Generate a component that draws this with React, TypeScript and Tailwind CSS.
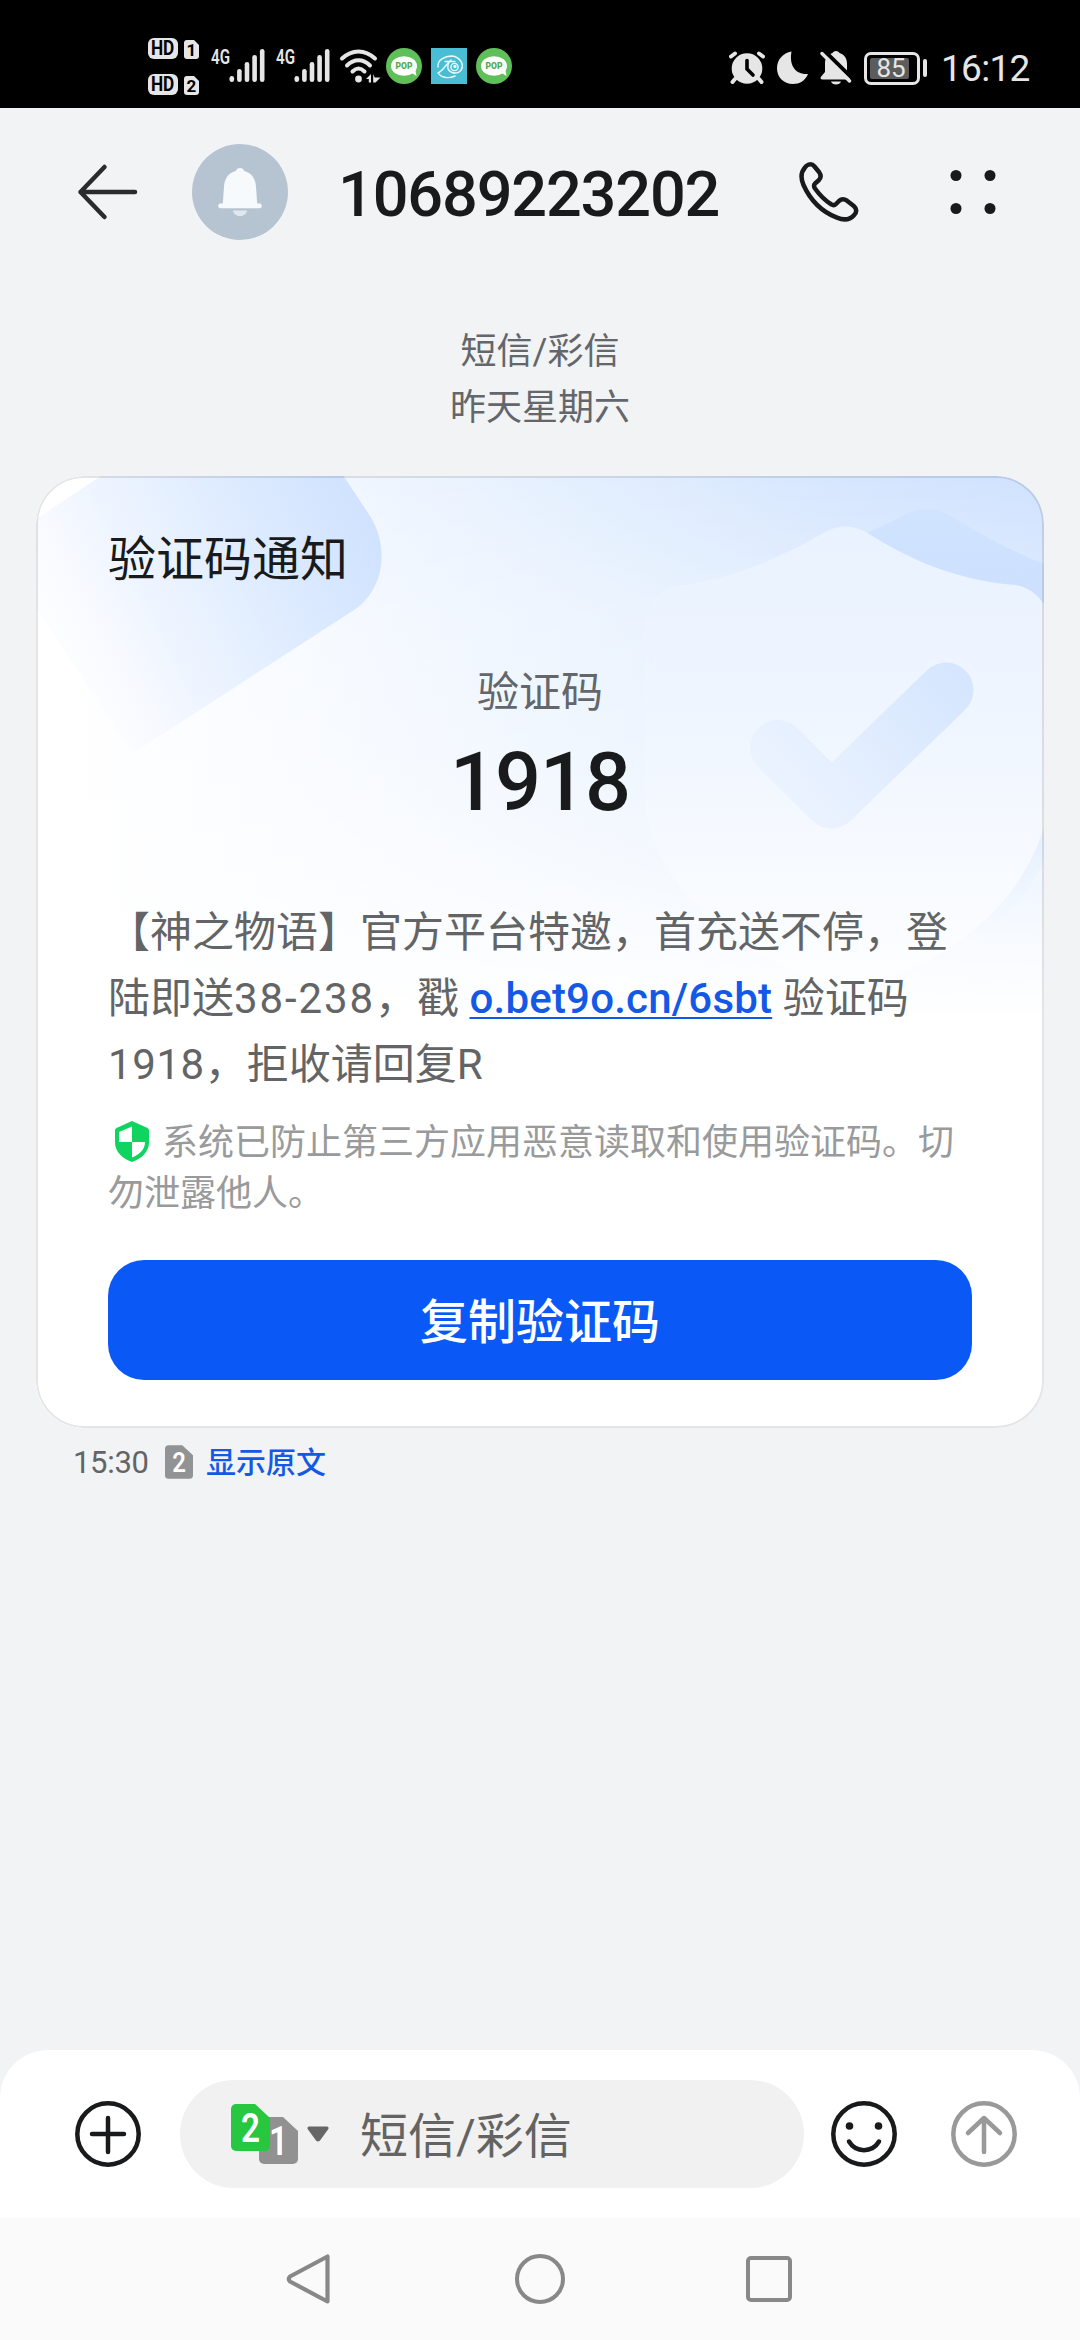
import type { ReactNode } from 'react';

const SIM_NUMBER = '10689223202';

function HdBadge({ slot }: { slot: string }) {
  return (
    <div className="flex gap-[6px]">
      <div className="flex h-[21px] w-[30px] items-center justify-center rounded-[6px] bg-[#e6e6e6] text-[20px] leading-[21px] font-bold text-black">
        <span className="scale-x-[0.86]">HD</span>
      </div>
      <svg className="overflow-visible" width="15" height="21" viewBox="0 0 15 21">
        <path d="M3 2h7l5 5v11a3 3 0 0 1-3 3H3a3 3 0 0 1-3-3V5a3 3 0 0 1 3-3z" fill="#e6e6e6" />
        <text x="7.500" y="18" textAnchor="middle" fontSize="17" fontWeight="700" fill="#000">
          {slot}
        </text>
      </svg>
    </div>
  );
}

function Signal() {
  const bars = [6, 13, 20, 27, 33];
  return (
    <svg width="54" height="36" viewBox="0 0 54 36" fill="#e6e6e6">
      <text x="0" y="15.800" fontSize="20" fontWeight="600" textLength="19" lengthAdjust="spacingAndGlyphs">
        4G
      </text>
      {bars.map((h, i) => (
        <rect key={h} x={18.5 + i * 7.6} y={34 - h} width="4.600" height={h} rx="2.300" />
      ))}
    </svg>
  );
}

function WifiIcon() {
  return (
    <svg width="42" height="36" viewBox="0 0 42 36" fill="none" stroke="#e6e6e6" strokeWidth="4" strokeLinecap="round">
      <path d="M3 10.500C13 1 26 1 36 10.500" />
      <path d="M8 17.500C15 10.500 24 10.500 31 17.500" />
      <path d="M13.500 23.500C17.500 19.500 21.500 19.500 25.500 23.500" />
      <circle cx="19.500" cy="31" r="3.400" fill="#e6e6e6" stroke="none" />
      <path d="M27 31L32 26v8.500h-2.200V31zM34.200 26l1.500 3.500H41.500L36.500 34.500h-2.300z" fill="#e6e6e6" stroke="none" />
    </svg>
  );
}

function PopIcon() {
  return (
    <svg width="36" height="36" viewBox="0 0 36 36">
      <circle cx="18" cy="18" r="18" fill="#5fc05a" />
      <ellipse cx="18" cy="18" rx="13" ry="9.800" fill="#fff" />
      <path d="M24 24l6.500 4-1.500-8z" fill="#fff" />
      <text x="9.500" y="21.300" fontSize="9" fontWeight="900" fill="#4fae4d" textLength="17" lengthAdjust="spacingAndGlyphs">
        POP
      </text>
    </svg>
  );
}

function FishIcon() {
  return (
    <svg width="36" height="36" viewBox="0 0 36 36" fill="none" stroke="#e8fbff" strokeWidth="1.400" strokeLinecap="round">
      <rect width="36" height="36" fill="#49bdd3" stroke="none" />
      <path d="M7 19C6 12 14 8 21 8c8 1 12 8 9.500 13" />
      <path d="M7 25C13 22 15 16 20 12M8 26C12 31 20 30 24 28" />
      <path d="M14 13.500h10M18 14c-2 4-2 9 3 10.500C26 26 30 24 31 20" />
      <circle cx="23.500" cy="19" r="3.600" />
      <circle cx="24" cy="18.500" r="1" />
    </svg>
  );
}

function AlarmIcon() {
  return (
    <svg width="36" height="34" viewBox="0 0 36 34" stroke="#e6e6e6" strokeLinecap="round" fill="none">
      <circle cx="18" cy="17.500" r="15.300" fill="#e6e6e6" stroke="none" />
      <path d="M2 5.500L6 2.500M34 5.500L30 2.500" strokeWidth="4" />
      <path d="M6 28l-2.500 3M30 28l2.500 3" strokeWidth="4" />
      <path d="M18 9.500v8.500l6 6" stroke="#000" strokeWidth="3.600" />
    </svg>
  );
}

function MutedBellIcon() {
  return (
    <svg width="32" height="34" viewBox="0 0 32 34">
      <path
        d="M16 0c2 0 3 1 3.500 2C24.500 3.500 27 7.500 27 12.500v9l3 4.500c.6 1.200 0 2.500-1.400 2.500H2.500C.5 28.500 0 27 1 25.800L5 21v-8.500C5 7.500 7.500 3.500 12.500 2 13 1 14 0 16 0z"
        fill="#e6e6e6"
      />
      <path d="M11 30.500h10c-1 4-9 4-10 0z" fill="#e6e6e6" />
      <path d="M4-.5L36 31" stroke="#000" strokeWidth="4" />
      <path d="M2 2.500L29.500 30" stroke="#e6e6e6" strokeWidth="3.400" strokeLinecap="round" />
    </svg>
  );
}

function StatusBar() {
  return (
    <div className="flex h-[108px] items-start bg-black pl-[148px] text-[#e6e6e6]">
      <div className="flex flex-col gap-[15px] pt-[38px]">
        <HdBadge slot="1" />
        <HdBadge slot="2" />
      </div>
      <div className="flex pt-[48px]">
        <div className="ml-[12px] flex gap-[11px]">
          <Signal />
          <Signal />
        </div>
        <div className="ml-[9px] flex">
          <WifiIcon />
        </div>
        <div className="ml-[5px] flex gap-[9px]">
          <PopIcon />
          <FishIcon />
          <PopIcon />
        </div>
      </div>
      <div className="ml-auto flex items-center pt-[50px] pr-[49px]">
        <AlarmIcon />
        <svg className="ml-[12px]" width="32" height="34" viewBox="0 0 32 34">
          <path d="M14.500.5C12 14 18 24 31 23c-3 7-8.500 10-15 10C6.500 33 0 26 0 17.500 0 8.500 6 2 14.500.5z" fill="#e6e6e6" />
        </svg>
        <div className="ml-[11px]">
          <MutedBellIcon />
        </div>
        <div className="ml-[12px] flex h-[33px] w-[56px] rounded-[7px] border-[3px] border-[#e6e6e6] p-[3px]">
          <div className="flex h-[21px] w-[39px] items-center justify-center rounded-[2px] bg-[#5c5c5c] pl-[3px] text-[26px] leading-none">
            85
          </div>
        </div>
        <div className="ml-[3px] h-[18px] w-[4px] rounded-[2px] bg-[#e6e6e6]" />
        <div className="ml-[14px] w-[90px] pt-[2px] text-[37px] leading-[34px] tracking-[-0.700px] whitespace-nowrap">16:12</div>
      </div>
    </div>
  );
}

function Header() {
  return (
    <header className="flex h-[168px] items-center pl-[77px]">
      <svg width="62" height="58" viewBox="0 0 62 58" fill="none" stroke="#2a2b2d" strokeWidth="4.500" strokeLinecap="round" strokeLinejoin="round">
        <path d="M27.500 4L3.500 29l24 25M3.500 29H58" />
      </svg>
      <svg className="ml-[53px]" width="96" height="96" viewBox="0 0 96 96">
        <circle cx="48" cy="48" r="48" fill="#b6c4d2" />
        <path
          d="M48 24c2 0 3.500 1.200 4.300 3C60 29 63.500 35 64 43l1.200 16.500H68a2.500 2.500 0 0 1 0 4.800H28a2.500 2.500 0 0 1 0-4.800h2.800L32 43c.5-8 4-14 11.700-16 .8-1.800 2.300-3 4.300-3z"
          fill="#f7fafd"
        />
        <path d="M41 66.500h14c-1 7.500-13 7.500-14 0z" fill="#e1e8ef" />
      </svg>
      <h1 className="ml-[50px] w-[390px] pt-[5px] text-[63px] leading-none font-medium tracking-[-1.150px] whitespace-nowrap text-[#191a1b]">
        {SIM_NUMBER}
      </h1>
      <svg className="ml-[70px]" width="64" height="64" viewBox="0 0 64 64" fill="none" stroke="#191a1b" strokeWidth="4.500" strokeLinejoin="round">
        <path d="M7 7.500C10 3.500 14 3.500 16.500 6.500L21 12c2.500 3.500 2.200 6-.5 8.500L17 23.500c-1.500 1.500-1.200 3 0 5C22 35.500 27 40.500 33.500 44.500c1.500 1 3 1 4.500-.5l3-3c2.500-2.300 5-2.300 8-.3l6.500 5c3.500 3 3.500 6.500.5 9.500-4 4.500-9.500 5.500-17 2.500C23 51.500 12.500 40.500 5.500 25 2.500 18 3 12 7 7.500z" />
      </svg>
      <svg className="ml-[87px]" width="48" height="48" viewBox="0 0 48 48" fill="#191a1b">
        <circle cx="7" cy="7.500" r="5.500" />
        <circle cx="41" cy="7.500" r="5.500" />
        <circle cx="7" cy="40.500" r="5.500" />
        <circle cx="41" cy="40.500" r="5.500" />
      </svg>
    </header>
  );
}

function CardBackdrop() {
  return (
    <svg className="absolute inset-0" width="1008" height="952" viewBox="36 476 1008 952">
      <defs>
        <linearGradient id="across" gradientUnits="userSpaceOnUse" x1="36" y1="0" x2="1044" y2="0">
          <stop offset="0.04" stopColor="#ffffff" />
          <stop offset="0.35" stopColor="#eef5ff" />
          <stop offset="0.6" stopColor="#e0edfe" />
          <stop offset="0.8" stopColor="#d6e6fe" />
          <stop offset="1" stopColor="#cfe2ff" />
        </linearGradient>
        <linearGradient id="fade" gradientUnits="userSpaceOnUse" x1="0" y1="476" x2="0" y2="1020">
          <stop offset="0" stopColor="#fff" stopOpacity="0" />
          <stop offset="0.25" stopColor="#fff" stopOpacity="0.35" />
          <stop offset="0.5" stopColor="#fff" stopOpacity="0.48" />
          <stop offset="0.75" stopColor="#fff" stopOpacity="0.72" />
          <stop offset="1" stopColor="#fff" stopOpacity="1" />
        </linearGradient>
        <linearGradient id="tile" gradientUnits="userSpaceOnUse" x1="365" y1="500" x2="70" y2="650">
          <stop offset="0" stopColor="#cfe2ff" />
          <stop offset="0.5" stopColor="#e4efff" />
          <stop offset="0.9" stopColor="#f8faff" />
          <stop offset="1" stopColor="#fcfdff" />
        </linearGradient>
        <linearGradient id="shield" gradientUnits="userSpaceOnUse" x1="845" y1="527" x2="845" y2="985">
          <stop offset="0" stopColor="#e9f2ff" />
          <stop offset="0.45" stopColor="#f0f6ff" />
          <stop offset="1" stopColor="#fdfeff" />
        </linearGradient>
        <linearGradient id="shieldBack" gradientUnits="userSpaceOnUse" x1="0" y1="509" x2="0" y2="960">
          <stop offset="0" stopColor="#d0e3ff" />
          <stop offset="0.3" stopColor="#cbe0ff" />
          <stop offset="0.7" stopColor="#e4effe" />
          <stop offset="1" stopColor="#fbfdff" />
        </linearGradient>
        <linearGradient id="tick" gradientUnits="userSpaceOnUse" x1="960" y1="680" x2="800" y2="820">
          <stop offset="0" stopColor="#d5e6fe" />
          <stop offset="1" stopColor="#ecf3ff" />
        </linearGradient>
      </defs>
      <rect x="36" y="476" width="1008" height="952" fill="url(#across)" />
      <rect x="36" y="476" width="1008" height="952" fill="url(#fade)" />
      <path d="M36 519L101 476H343.500L370 516C390 548 384 590 354 610L138 750Q132 754 128 748L36 608z" fill="url(#tile)" />
      <path d="M867 533C885 525 897 519 906 514Q927 503 949 515C985 537 1010 550 1044 564V860C1030 890 1010 915 975 945L867 800z" fill="url(#shieldBack)" />
      <path
        d="M827 531Q845 522 864 531C910 560 955 580 1015 585Q1032 587 1044 604V828C1025 885 985 935 905 972Q850 995 795 972C710 935 645 870 645 790V630Q645 592 678 586C735 578 780 558 827 531z"
        fill="url(#shield)"
      />
      <path d="M777.600 747.500L831.500 801L946 690" fill="none" stroke="url(#tick)" strokeWidth="55" strokeLinecap="round" strokeLinejoin="round" />
    </svg>
  );
}

function MessageCard() {
  return (
    <section className="relative h-[952px] overflow-hidden rounded-[48px] bg-white">
      <CardBackdrop />
      <div className="relative flex flex-col px-[72px] pt-[54px]">
        <h2 className="text-[48px] leading-[60px] text-[#191a1b]">验证码通知</h2>
        <div className="mt-[76px] flex flex-col items-center">
          <span className="text-[42px] leading-[54px] text-[#63666a]">验证码</span>
          <span className="mt-[13px] text-[81px] leading-[100px] font-medium tracking-[-1px] text-[#191a1b]">1918</span>
        </div>
        <div className="mt-[67px] text-[42px] leading-[66px] whitespace-nowrap text-[#636466]">
          <p>【神之物语】官方平台特邀，首充送不停，登</p>
          <p>
            陆即送<span className="tracking-[1.900px]">38-238</span>，戳{' '}
            <a className="font-medium tracking-[0.200px] text-[#1459e6] underline decoration-2 underline-offset-4">o.bet9o.cn/6sbt</a>{' '}
            验证码
          </p>
          <p>
            <span className="tracking-[0.600px]">1918</span>，拒收请回复R
          </p>
        </div>
        <div className="mt-[17px] text-[36px] leading-[51px] text-[#999a9b]">
          <p className="flex items-center whitespace-nowrap">
            <svg className="mr-[12px] ml-[6px]" width="36" height="42" viewBox="0 0 36 42">
              <path d="M18 0l15.500 7Q35 7.800 35 9.500v12c0 9-7 16-17 19.500C8 37.500 1 30.500 1 21.500V9.500q0-1.700 1.500-2.500z" fill="#0fd45f" />
              <path d="M18 5.500V21H5V11zM18 21H31C31 28.500 26 33 18 36.500z" fill="#fff" />
            </svg>
            <span className="pt-[3px]">系统已防止第三方应用恶意读取和使用验证码。切</span>
          </p>
          <p>勿泄露他人。</p>
        </div>
        <button className="mt-[40px] h-[120px] rounded-[36px] bg-[#0a59f7] pt-[5px] text-[48px] leading-none font-medium text-white">
          复制验证码
        </button>
      </div>
      <div className="pointer-events-none absolute inset-0 rounded-[48px] border-2 border-black/10" />
    </section>
  );
}

function SimShape({ color, slot, width, height, fontSize }: { color: string; slot: string; width: number; height: number; fontSize: number }) {
  return (
    <svg width={width} height={height} viewBox="0 0 39 47">
      <path d="M5 0h19l15 14v28a5 5 0 0 1-5 5H5a5 5 0 0 1-5-5V5a5 5 0 0 1 5-5z" fill={color} />
      <text x="10" y="38" fontSize={fontSize} fontWeight="600" textLength="19" lengthAdjust="spacingAndGlyphs" fill="#fff">
        {slot}
      </text>
    </svg>
  );
}

function RoundIcon({ color, children }: { color: string; children: ReactNode }) {
  return (
    <svg width="66" height="66" viewBox="0 0 66 66" fill="none" stroke={color} strokeWidth="4.500" strokeLinecap="round" strokeLinejoin="round">
      <circle cx="33" cy="33" r="30.700" />
      {children}
    </svg>
  );
}

function Composer() {
  return (
    <footer className="flex h-[168px] items-center rounded-t-[48px] bg-white pl-[75px]">
      <RoundIcon color="#191a1b">
        <path d="M33 17v34M17 33h32" />
      </RoundIcon>
      <div className="ml-[39px] flex h-[108px] w-[624px] items-center rounded-full bg-[#f1f1f1] pl-[51px]">
        <div className="relative h-[60px] w-[67px]">
          <div className="absolute top-[13px] left-[28px]">
            <SimShape color="#919191" slot="1" width={39} height={47} fontSize={40} />
          </div>
          <div className="absolute top-0 left-0">
            <SimShape color="#27c840" slot="2" width={39} height={47} fontSize={40} />
          </div>
        </div>
        <svg className="ml-[9px]" width="22" height="16" viewBox="0 0 22 16">
          <path d="M2 .5h18q2.500.5 1 3L13 14.500q-2 2-4 0L1 3.500Q-.5 1 2 .5z" fill="#666" />
        </svg>
        <span className="ml-[31px] pt-[5px] text-[48px] leading-none text-[#636363]">短信/彩信</span>
      </div>
      <div className="ml-[27px]">
        <RoundIcon color="#191a1b">
          <circle cx="18.500" cy="25" r="3.800" fill="#191a1b" stroke="none" />
          <circle cx="47.500" cy="25" r="3.800" fill="#191a1b" stroke="none" />
          <path d="M18 40.500c7 11.500 23 11.500 30 0" />
        </RoundIcon>
      </div>
      <div className="ml-[54px]">
        <RoundIcon color="#999999">
          <path d="M33 18v33M17 32L33 17l16 15" />
        </RoundIcon>
      </div>
    </footer>
  );
}

function NavBar() {
  return (
    <nav className="flex h-[122px] items-center bg-[#fafafa] pl-[286px]">
      <svg width="46" height="52" viewBox="0 0 46 52" fill="none" stroke="#888" strokeWidth="4.200" strokeLinejoin="round">
        <path d="M41.500 3.500V48.500L4 28.500Q1.500 26 4 23.500z" />
      </svg>
      <div className="ml-[183px] size-[50px] rounded-full border-[4px] border-[#888]" />
      <div className="ml-[181px] size-[46px] rounded-[5px] border-[4px] border-[#888]" />
    </nav>
  );
}

export default function App() {
  return (
    <div className="flex h-[2340px] w-[1080px] flex-col overflow-hidden bg-[#f1f3f5] font-[Roboto,'Noto_Sans_CJK_SC',sans-serif]">
      <StatusBar />
      <Header />
      <main className="flex flex-1 flex-col px-[36px] pt-[49px]">
        <div className="mb-[40px] text-center text-[36px] leading-[55.500px] text-[#63666a]">
          <p>短信/彩信</p>
          <p>昨天星期六</p>
        </div>
        <MessageCard />
        <div className="mt-[12px] flex h-[44px] items-center pl-[37px] text-[30px] leading-none">
          <span className="w-[92px] pt-[1px] text-[31px] tracking-[-0.300px] text-[#636466]">15:30</span>
          <SimShape color="#929394" slot="2" width={28} height={34} fontSize={38} />
          <span className="ml-[13px] pt-[2px] font-medium text-[#1459e6]">显示原文</span>
        </div>
      </main>
      <Composer />
      <NavBar />
    </div>
  );
}
